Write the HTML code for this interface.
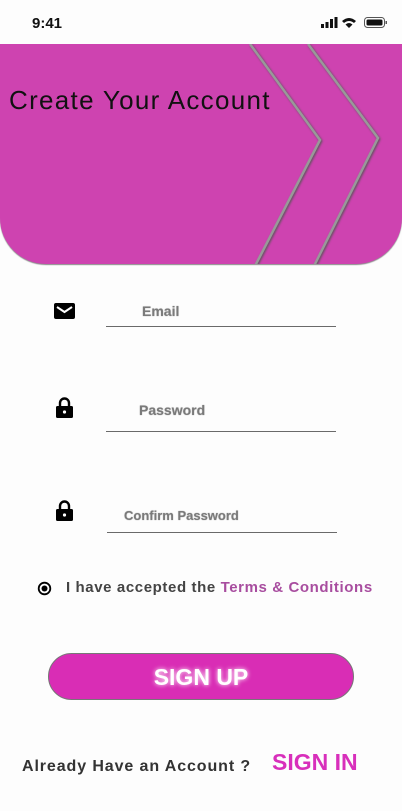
<!DOCTYPE html>
<html><head><style>
body{margin:0;width:402px;height:811px;background:#fdfdfd;position:relative;overflow:hidden;font-family:"Liberation Sans",sans-serif}
.a{position:absolute}
.lab{color:#7a7a7a;font-weight:bold;font-size:14px;text-shadow:0 0 1px #999}
.line{height:1px;background:#6a6a6a}
</style></head><body>
<div class="a" style="left:32px;top:15px;font-size:15px;font-weight:bold;color:#111">9:41</div>
<svg class="a" style="left:320px;top:16px" width="68" height="14" viewBox="0 0 68 14">
<rect x="1" y="8" width="3" height="4" fill="#111"/><rect x="5.5" y="6" width="3" height="6" fill="#111"/><rect x="10" y="3" width="3" height="9" fill="#111"/><rect x="14.5" y="1" width="3" height="11" fill="#111"/>
<path d="M22 5 Q29 -1 36 5 L34 7 Q29 3 24 7Z M25.5 8.5 Q29 5.5 32.5 8.5 L29 12Z" fill="#111"/>
<rect x="44.5" y="1.5" width="20" height="10" rx="3" fill="none" stroke="#555"/><rect x="46.5" y="3.5" width="16" height="6" rx="1.5" fill="#111"/><rect x="65.5" y="5" width="1.5" height="3" fill="#555"/>
</svg>
<div class="a" style="left:0;top:44px;width:402px;height:220px;background:#ce43b0;border-radius:0 0 46px 46px;overflow:hidden;box-shadow:0 1px 1px #888">
<svg width="402" height="220" style="position:absolute;left:0;top:0">
<polyline points="250,0 320,96 255,222" fill="none" stroke="#999" stroke-width="2.5" style="filter:drop-shadow(1px 1px 1px #555)"/>
<polyline points="308,0 378,94 314,222" fill="none" stroke="#999" stroke-width="2.5" style="filter:drop-shadow(1px 1px 1px #555)"/>
</svg>
<div class="a" style="left:9px;top:41px;font-size:26px;color:#111;letter-spacing:1.3px;white-space:nowrap">Create Your Account</div>
</div>
<svg class="a" style="left:54px;top:303px" width="21" height="16"><rect width="21" height="16" rx="2" fill="#000"/><polyline points="3,4 10.5,9 18,4" fill="none" stroke="#fff" stroke-width="2"/></svg>
<div class="a lab" style="left:142px;top:303px">Email</div>
<div class="a line" style="left:106px;top:326px;width:230px"></div>
<svg class="a" style="left:56px;top:397px" width="17" height="21"><path d="M4 9V6a4.5 4.5 0 0 1 9 0v3" fill="none" stroke="#000" stroke-width="2.4"/><rect y="9" width="17" height="12" rx="1.5" fill="#000"/><circle cx="8.5" cy="15" r="1.6" fill="#fff"/></svg>
<div class="a lab" style="left:139px;top:402px">Password</div>
<div class="a line" style="left:106px;top:431px;width:230px"></div>
<svg class="a" style="left:56px;top:500px" width="17" height="21"><path d="M4 9V6a4.5 4.5 0 0 1 9 0v3" fill="none" stroke="#000" stroke-width="2.4"/><rect y="9" width="17" height="12" rx="1.5" fill="#000"/><circle cx="8.5" cy="15" r="1.6" fill="#fff"/></svg>
<div class="a lab" style="left:124px;top:508px;font-size:13px">Confirm Password</div>
<div class="a line" style="left:107px;top:532px;width:230px"></div>
<svg class="a" style="left:37px;top:581px" width="15" height="15"><circle cx="7.5" cy="7.5" r="5.8" fill="none" stroke="#000" stroke-width="1.8"/><circle cx="7.5" cy="7.5" r="3" fill="#000"/></svg>
<div class="a" style="left:66px;top:579px;font-size:15px;font-weight:bold;color:#444;white-space:nowrap;letter-spacing:0.6px">I have accepted the <span style="color:#a84d9f">Terms &amp; Conditions</span></div>
<div class="a" style="left:48px;top:653px;width:306px;height:47px;border-radius:24px;background:#d92db5;border:1px solid #777;box-sizing:border-box;text-align:center;line-height:46px;color:#fff;font-weight:bold;font-size:23px;text-shadow:0 0 5px #fff">SIGN UP</div>
<div class="a" style="left:22px;top:758px;font-size:16px;font-weight:bold;color:#333;letter-spacing:0.9px;white-space:nowrap">Already Have an Account ?</div>
<div class="a" style="left:272px;top:749px;font-size:23px;font-weight:bold;color:#d82fbb">SIGN IN</div>
</body></html>
